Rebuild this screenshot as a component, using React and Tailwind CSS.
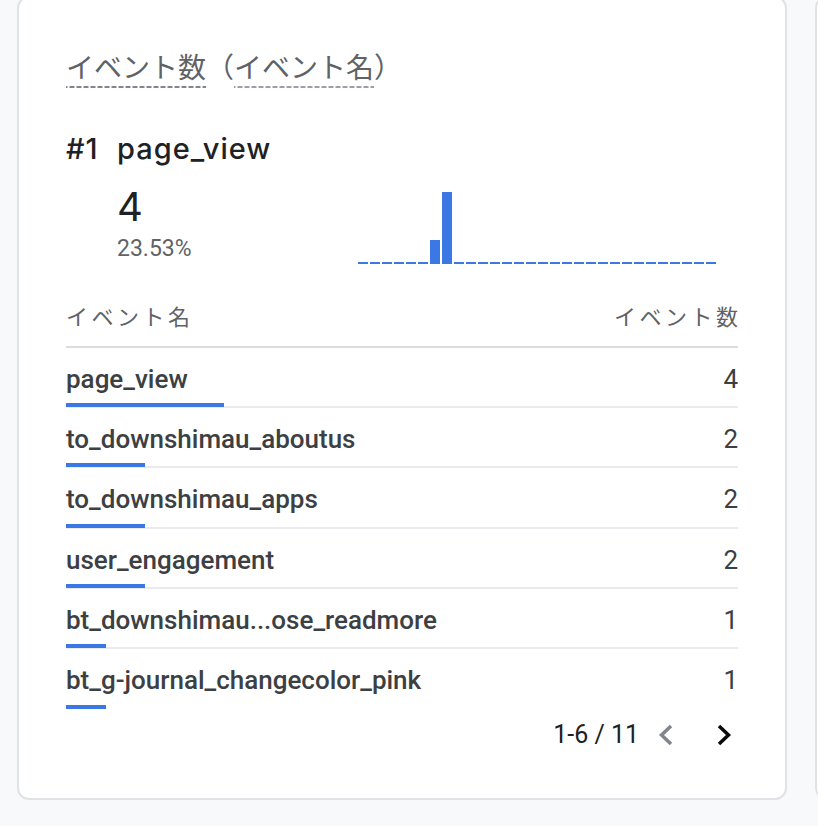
const ROWS = [
  { name: 'page_view', count: 4 },
  { name: 'to_downshimau_aboutus', count: 2 },
  { name: 'to_downshimau_apps', count: 2 },
  { name: 'user_engagement', count: 2 },
  { name: 'bt_downshimau...ose_readmore', count: 1 },
  { name: 'bt_g-journal_changecolor_pink', count: 1 },
];
const MAX = 4;
const BAR_MAX = 158;

// 30 days, only two have events
const SPARK = Array.from({ length: 30 }, (_, i) => (i === 6 ? 1 : i === 7 ? 3 : 0));

export default function App() {
  return (
    <div className="w-[818px] h-[826px] overflow-hidden bg-[#f8f9fa] flex gap-[28px] pl-[17px] font-['Roboto','Noto_Sans_CJK_JP',sans-serif]">
      <div className="-mt-[4px] h-[804px] w-[770px] shrink-0 rounded-[12px] border-2 border-[#e0e2e5] bg-white px-[47px]">
        {/* Card title */}
        <div className="pt-[53px] text-[28px] leading-[36px] text-[#5f6368]">
          <span className="inline-block pb-[1px] bg-[linear-gradient(to_right,#80868b_5px,transparent_5px)] bg-[length:7px_2px] bg-repeat-x bg-bottom">イベント数</span>
          （
          <span className="inline-block pb-[1px] bg-[linear-gradient(to_right,#9aa0a6_5px,transparent_5px)] bg-[length:7px_2px] bg-repeat-x bg-bottom">イベント名</span>
          ）
        </div>

        {/* Top item */}
        <div className="mt-[45px] text-[29px] leading-[32px] tracking-[1px] text-[#202124] font-['Inter',sans-serif] font-medium">
          <span className="inline-block w-[51px]">#1</span>page_view
        </div>

        <div className="flex mt-[20px]">
          <div className="w-[292px] pl-[51px]">
            <div className="text-[40px] leading-[44px] text-[#202124] font-['Inter',sans-serif]">4</div>
            <div className="mt-[6px] text-[23px] leading-[28px] text-[#5f6368]">23.53%</div>
          </div>
          <div className="mt-[6.5px] h-[72px] flex items-end gap-[2px]">
            {SPARK.map((v, i) => (
              <div key={i} className="w-[10px] bg-[#3c78e4]" style={{ height: v ? v * 24 : 2 }} />
            ))}
          </div>
        </div>

        {/* Table header */}
        <div className="mt-[37px] pb-[17px] border-b-2 border-[#dadce0] flex justify-between text-[22px] leading-[28px] tracking-[3.5px] text-[#5f6368] font-['Noto_Sans_CJK_JP',sans-serif]">
          <span>イベント名</span>
          <span className="-mr-[3.5px]">イベント数</span>
        </div>

        {ROWS.map((r, i) => (
          <div
            key={r.name}
            className={`h-[60.4px] pt-[16px] flex flex-col border-b-2 ${i === ROWS.length - 1 ? 'border-transparent' : 'border-[#e8eaed]'}`}
          >
            <div className="flex justify-between text-[26px] leading-[30px] text-[#3c4043]">
              <span className="font-medium">{r.name}</span>
              <span>{r.count}</span>
            </div>
            <div className="mt-auto -mb-[1px] h-[4px] bg-[#3c78e4]" style={{ width: (r.count / MAX) * BAR_MAX }} />
          </div>
        ))}

        {/* Pagination */}
        <div className="h-[50px] flex items-center justify-end">
          <span className="text-[25px] text-[#202124]">1-6 / 11</span>
          <svg className="ml-[19px]" width="15" height="22" viewBox="0 0 15 22" fill="none" stroke="#80868b" strokeWidth="3.5">
            <polyline points="13,2 3.5,11 13,20" />
          </svg>
          <svg className="ml-[44px] mr-[6px]" width="15" height="22" viewBox="0 0 15 22" fill="none" stroke="#0b0b0b" strokeWidth="3.5">
            <polyline points="2,2 11.5,11 2,20" />
          </svg>
        </div>
      </div>

      <div className="-mt-[4px] h-[804px] w-[100px] shrink-0 rounded-[12px] border-2 border-[#e0e2e5] bg-white" />
    </div>
  );
}
